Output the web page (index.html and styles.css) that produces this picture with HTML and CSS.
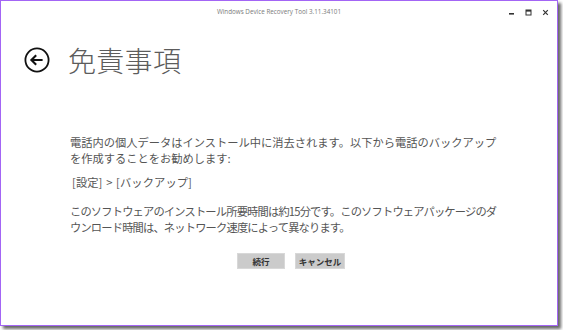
FILE: index.html
```html
<!DOCTYPE html>
<html lang="ja">
<head>
<meta charset="utf-8">
<title>Windows Device Recovery Tool</title>
<link rel="stylesheet" href="styles.css">
</head>
<body>
<div class="window">
  <div class="titlebar">
    <span class="title">Windows Device Recovery Tool 3.11.34101</span>
    <div class="controls">
      <svg class="ctl" viewBox="0 0 7 7" width="7" height="7"><rect x="1" y="4" width="5" height="1.6" fill="#333"/></svg>
      <svg class="ctl" viewBox="0 0 7 7" width="7" height="7"><rect x="1" y="1" width="5" height="5" fill="none" stroke="#333" stroke-width="1"/><rect x="1" y="1" width="5" height="1.6" fill="#333"/></svg>
      <svg class="ctl" viewBox="0 0 7 7" width="7" height="7"><path d="M1.2 1.2 L5.8 5.8 M5.8 1.2 L1.2 5.8" stroke="#333" stroke-width="1.2"/></svg>
    </div>
  </div>
  <div class="header">
    <svg class="back" viewBox="0 0 26 26" width="26" height="26">
      <circle cx="13" cy="13" r="11.6" fill="none" stroke="#111" stroke-width="1.8"/>
      <path d="M7.4 13 H18.6 M12.2 8.3 L7.4 13 L12.2 17.7" fill="none" stroke="#111" stroke-width="2.1" stroke-linejoin="miter"/>
    </svg>
    <h1 class="heading">免責事項</h1>
  </div>
  <div class="content">
    <p class="para first">電話内の個人データはインストール中に消去されます。以下から電話のバックアップを作成することをお勧めします:</p>
    <p class="path">[設定] &gt; [バックアップ]</p>
    <p class="para second">このソフトウェアのインストール所要時間は約15分です。このソフトウェアパッケージのダウンロード時間は、ネットワーク速度によって異なります。</p>
    <div class="buttons">
      <button class="btn">続行</button>
      <button class="btn">キャンセル</button>
    </div>
  </div>
</div>
</body>
</html>
```
FILE: styles.css
```css
html, body {
  margin: 0;
  padding: 0;
  background: #fff;
}
body {
  width: 563px;
  height: 330px;
  overflow: hidden;
}
.window {
  box-sizing: border-box;
  width: 558px;
  height: 326px;
  border: 1px solid #a365f5;
  background: #fff;
  box-shadow: 3px 3px 3px rgba(0, 0, 0, 0.6);
  display: flex;
  flex-direction: column;
  font-family: "Noto Sans CJK JP", "Noto Sans", sans-serif;
}
.titlebar {
  position: relative;
  height: 23px;
  display: flex;
  align-items: center;
  justify-content: center;
}
.title {
  font-family: "Open Sans", "Liberation Sans", sans-serif;
  font-size: 6.3px;
  color: #7a7a7a;
  margin-top: -2px;
}
.controls {
  position: absolute;
  right: 8px;
  top: 8px;
  display: flex;
  gap: 10px;
}
.ctl { display: block; }
.header {
  display: flex;
  align-items: center;
  padding-left: 23px;
  margin-top: 23px;
  height: 26px;
}
.back { display: block; }
.heading {
  margin: 0 0 0 18px;
  font-size: 28px;
  font-weight: 300;
  line-height: 26px;
  color: #5c5c5c;
  letter-spacing: 0.3px;
}
.content {
  padding-left: 69px;
  margin-top: 61px;
  width: 440px;
}
.para {
  margin: 0;
  font-size: 11.25px;
  line-height: 16px;
  color: #555;
  width: 433px;
}
.path {
  margin: 8px 0 0 0;
  padding-left: 2px;
  font-size: 11.25px;
  line-height: 16px;
  color: #555;
  letter-spacing: 0.1px;
  word-spacing: 1px;
}
.second {
  margin-top: 13px;
  letter-spacing: -0.82px;
}
.buttons {
  display: flex;
  gap: 10px;
  margin-top: 18px;
  padding-left: 167px;
}
.btn {
  box-sizing: border-box;
  width: 48px;
  height: 16px;
  padding: 0;
  border: 1px solid #d8d8d8;
  background: #cbcbcb;
  font-family: "Noto Sans CJK JP", sans-serif;
  font-size: 8.5px;
  font-weight: 700;
  color: #333;
  line-height: 14px;
}
.btn + .btn { width: 50px; }
```
